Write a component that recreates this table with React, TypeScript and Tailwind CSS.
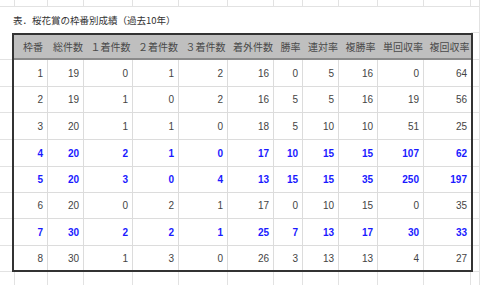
import React from "react";

const sheetCols = [15, 33, 36, 49, 46, 49, 46, 29, 36, 39, 46, 47];
const sheetRows = [7, 26, 27, 27, 26, 27, 27, 26, 26, 27, 26, 26, 26];

const headers = ["枠番", "総件数", "１着件数", "２着件数", "３着件数", "着外件数", "勝率", "連対率", "複勝率", "単回収率", "複回収率"];

type Row = { v: number[]; hot?: boolean };

const rows: Row[] = [
  { v: [1, 19, 0, 1, 2, 16, 0, 5, 16, 0, 64] },
  { v: [2, 19, 1, 0, 2, 16, 5, 5, 16, 19, 56] },
  { v: [3, 20, 1, 1, 0, 18, 5, 10, 10, 51, 25] },
  { v: [4, 20, 2, 1, 0, 17, 10, 15, 15, 107, 62], hot: true },
  { v: [5, 20, 3, 0, 4, 13, 15, 15, 35, 250, 197], hot: true },
  { v: [6, 20, 0, 2, 1, 17, 0, 10, 15, 0, 35] },
  { v: [7, 30, 2, 2, 1, 25, 7, 13, 17, 30, 33], hot: true },
  { v: [8, 30, 1, 3, 0, 26, 3, 13, 13, 4, 27] },
];

const rowH = ["h-[27px]", "h-[26px]", "h-[27px]", "h-[27px]", "h-[26px]", "h-[26px]", "h-[27px]", "h-[24px]"];

export default function App() {
  return (
    <div className="relative h-[285px] w-[480px] overflow-hidden bg-white font-['Noto_Sans_CJK_JP',sans-serif]">
      <div className="grid grid-cols-[15px_33px_36px_49px_46px_49px_46px_29px_36px_39px_46px_47px_1fr] grid-rows-[7px_26px_27px_27px_26px_27px_27px_26px_26px_27px_26px_26px_26px]">
        {/* sheet gridlines */}
        {sheetRows.map((_, r) =>
          [...sheetCols, 0].map((_, c) => (
            <div
              key={`${r}-${c}`}
              style={{ gridRow: r + 1, gridColumn: c + 1 }}
              className="border-b border-r border-[#e2e2e2]"
            />
          ))
        )}

        {/* title */}
        <div className="col-start-1 col-end-13 row-start-2 flex items-center bg-white pl-[13px] pt-px text-[9.5px] text-[#333]">
          表．桜花賞の枠番別成績（過去10年）
        </div>

        {/* table */}
        <div className="col-start-2 col-end-13 row-start-3 row-end-12 -ml-[3px] -mr-[2px] grid grid-rows-[25px_auto] border-2 border-[#333] bg-white">
          <div className="grid grid-cols-[34px_36px_49px_46px_49px_46px_29px_36px_39px_46px_47px] border-b-2 border-[#8a8a8a] bg-[#bfbfbf]">
            {headers.map((h) => (
              <div key={h} className="flex items-center justify-center whitespace-nowrap pl-1 text-[10px] text-[#4a4a4a]">
                {h}
              </div>
            ))}
          </div>
          <div className="flex flex-col">
            {rows.map((row, i) => (
              <div
                key={i}
                className={`grid grid-cols-[34px_36px_49px_46px_49px_46px_29px_36px_39px_46px_47px] ${rowH[i]} ${i < rows.length - 1 ? "border-b border-[#dcdcdc]" : ""}`}
              >
                {row.v.map((n, j) => (
                  <div
                    key={j}
                    className={`flex items-center justify-end pr-[4px] font-['Liberation_Sans',sans-serif] text-[10px] ${j < 10 ? "border-r border-[#dcdcdc]" : ""} ${row.hot ? "font-bold text-[#1a1aff]" : "text-[#444]"}`}
                  >
                    {n}
                  </div>
                ))}
              </div>
            ))}
          </div>
        </div>
      </div>
    </div>
  );
}
